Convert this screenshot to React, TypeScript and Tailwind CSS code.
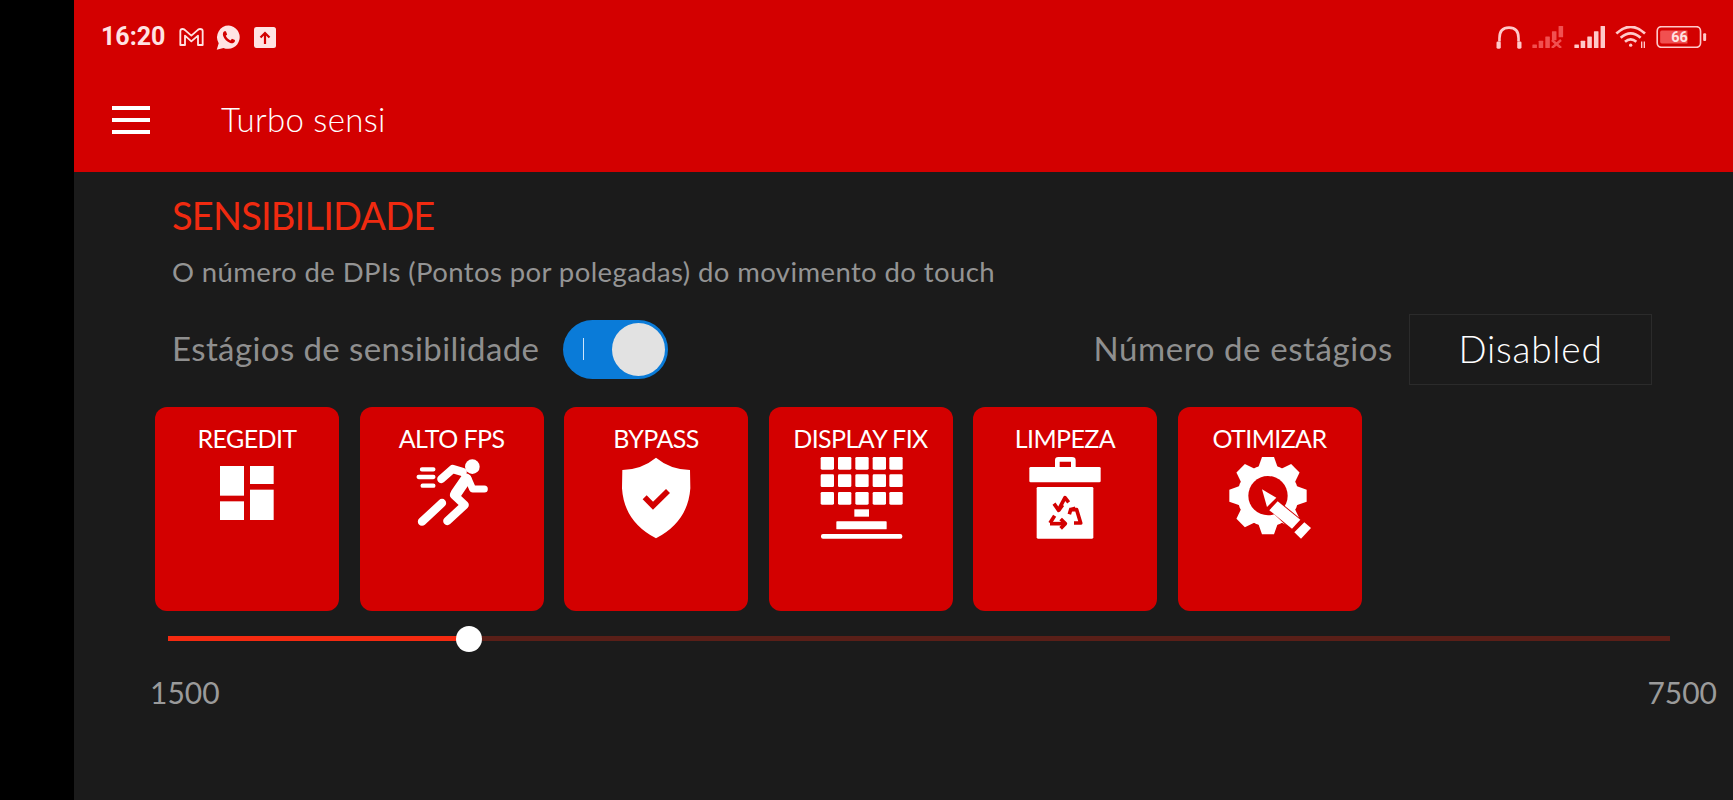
import React from "react";

const RED = "#d30000";
const W = "#ffffff";

function RegeditIcon() {
  return (
    <svg viewBox="142 165 300 270" className="w-[100px] h-[90px]" fill={W}>
      <rect x="211" y="195" width="72" height="89" />
      <rect x="301" y="195" width="71" height="54" />
      <rect x="211" y="301" width="72" height="56" />
      <rect x="301" y="266" width="71" height="91" />
    </svg>
  );
}

function RunIcon() {
  return (
    <svg viewBox="756 165 300 270" className="w-[100px] h-[90px]">
      <circle cx="967" cy="197" r="22" fill={W} />
      <g stroke={W} strokeLinecap="round" strokeLinejoin="round" fill="none">
        <path d="M816 205H850M806 228H850M818 254H850" strokeWidth="13" />
        <path d="M874 234L908 204L938 213" strokeWidth="25" />
        <path d="M948 234L918 278" strokeWidth="33" />
        <path d="M912 282L944 312L892 360" strokeWidth="25" />
        <path d="M954 232L968 264H1003" strokeWidth="21" />
        <path d="M816 362L876 306" strokeWidth="25" />
      </g>
    </svg>
  );
}

function ShieldIcon() {
  return (
    <svg viewBox="138 165 300 270" className="w-[100px] h-[90px]">
      <path d="M288 170Q330 205 390 207L391 262Q384 362 288 412Q192 362 186 262L187 207Q246 205 288 170Z" fill={W} />
      <path d="M254 289L279 314L324 270" fill="none" stroke={RED} strokeWidth="17" />
    </svg>
  );
}

function DisplayIcon() {
  const xs = [779, 831, 883, 935, 985];
  const ys = [168, 220, 273];
  return (
    <svg viewBox="750 165 300 270" className="w-[100px] h-[90px]" fill={W}>
      {ys.map((y) => xs.map((x) => <rect key={`${x}-${y}`} x={x} y={y} width="40" height="38" rx="4" />))}
      <rect x="880" y="325" width="44" height="22" />
      <rect x="826" y="361" width="151" height="24" rx="2" />
      <rect x="780" y="399" width="244" height="14" rx="6" />
    </svg>
  );
}

function TrashIcon() {
  return (
    <svg viewBox="165 165 300 270" className="w-[100px] h-[90px]">
      <path d="M285 200V178Q285 168 295 168H336Q347 168 347 178V200H333V182H299V200Z" fill={W} />
      <rect x="208" y="198" width="214" height="46" rx="4" fill={W} />
      <rect x="230" y="258" width="170" height="155" rx="4" fill={W} />
      <g fill="none" stroke={RED} strokeWidth="11" strokeLinejoin="round">
        <path d="M296 326L315 290L326 304" />
        <path d="M282 308L296 328L308 312" />
        <path d="M328 326H350L362 366H342" />
        <path d="M328 340L332 326L346 322" />
        <path d="M270 366L284 344" />
        <path d="M270 368H310" />
        <path d="M302 354L316 368L302 382" />
      </g>
    </svg>
  );
}

function GearIcon() {
  const angles = [0, 45, 90, 135, 180, 225, 270, 315];
  return (
    <svg viewBox="777 165 300 270" className="w-[100px] h-[90px]">
      <circle cx="921" cy="284" r="92" fill={W} />
      {angles.map((a) => (
        <path key={a} d="M903 168H939L952 205H890Z" fill={W} transform={`rotate(${a} 921 284)`} />
      ))}
      <circle cx="921" cy="284" r="59" fill={RED} />
      <path d="M925 326L950 297L1024 358L995 392Z" fill={RED} />
      <path d="M903 265L946 290L918 318Z" fill={W} />
      <path d="M950 301L1018 356L993 383L925 328Z" fill={W} />
      <path d="M1030 364L1050 381L1020 413L1000 394Z" fill={W} />
    </svg>
  );
}

function GmailMark() {
  return (
    <svg viewBox="327 83 73 54" className="w-[25px] h-[18px]" fill="none" stroke="#ffe3e3" strokeWidth="5.5" strokeLinejoin="round">
      <path d="M330 134V92Q330 86 337 86Q342 86 345 90L363 106L381 90Q384 86 389 86Q397 86 397 92V134H383V106L363 123L344 106V134Z" />
    </svg>
  );
}

function WhatsappMark() {
  return (
    <svg viewBox="0 0 24 24" className="ml-[12px] h-[25px] w-[25px]">
      <path d="M12.3 0.5A11.2 11.2 0 0 0 2.6 17.4L0.7 23.8L7.2 22A11.2 11.2 0 1 0 12.3 0.5Z" fill="#ffe3e3" />
      <path d="M8 6C6.8 6.7 6.2 8.4 6.9 10.5C8 13.5 10.5 16 13.6 17.2C15.7 17.9 17.4 17.2 18 16L18.2 14.5L15.3 13.1L13.9 14.8C11.9 13.9 10.3 12.3 9.4 10.3L10.7 9L9.5 6Z" fill={RED} />
    </svg>
  );
}

function UploadMark() {
  return (
    <svg viewBox="0 0 22 21" className="w-[22px] h-[21px]">
      <rect width="22" height="21" rx="2.5" fill="#ffe3e3" />
      <path d="M11 17V6M6.5 10.5L11 6L15.5 10.5" fill="none" stroke={RED} strokeWidth="2.2" />
    </svg>
  );
}

function Headphones() {
  return (
    <svg viewBox="78 45 78 70" className="w-[26px] h-[23px]" fill="none" stroke="#ffc9c9">
      <path d="M88 92V82Q88 50 117 50Q146 50 146 82V92" strokeWidth="8" />
      <rect x="79" y="92" width="13" height="22" rx="4" fill="#ffc9c9" strokeWidth="0" />
      <rect x="142" y="92" width="13" height="22" rx="4" fill="#ffc9c9" strokeWidth="0" />
    </svg>
  );
}

function Bars({ dim }: { dim?: boolean }) {
  const c = dim ? "#f15050" : "#ffc9c9";
  const bars = dim
    ? [
        [0, 103, 10],
        [18, 92, 21],
        [37, 80, 33],
        [56, 65, 26],
        [75, 50, 32],
      ]
    : [
        [0, 103, 10],
        [18, 92, 21],
        [37, 80, 33],
        [56, 65, 48],
        [75, 50, 63],
      ];
  return (
    <svg viewBox="0 50 88 63" className="w-[31.5px] h-[22px]">
      {bars.map(([x, y, h]) => (
        <rect key={x} x={x} y={y} width="13" height={h} rx="1.5" fill={c} />
      ))}
      {dim && <path d="M56 90L82 113M82 90L56 113" stroke={c} strokeWidth="7" />}
    </svg>
  );
}

function Wifi() {
  return (
    <svg viewBox="432 50 93 65" className="w-[31px] h-[22px]" fill="none" stroke="#ffc9c9" strokeWidth="8">
      <path d="M436 72Q479 32 522 72" />
      <path d="M449 85Q479 58 509 85" />
      <path d="M462 97Q479 82 496 97" />
      <circle cx="479" cy="107" r="5" fill="#ffc9c9" strokeWidth="0" />
      <path d="M512 96V120M520 96V120" strokeWidth="4" />
    </svg>
  );
}

function Battery() {
  return (
    <svg viewBox="560 48 152 67" className="w-[51px] h-[22px]">
      <rect x="562" y="50" width="132" height="63" rx="13" fill="none" stroke="#ffc9c9" strokeWidth="5" />
      <path d="M576 62H654V101H576Q571 101 571 96V67Q571 62 576 62Z" fill="#f15050" />
      <rect x="702" y="70" width="9" height="24" rx="3" fill="#ffc9c9" />
      <text x="630" y="98" textAnchor="middle" fontSize="44" fontWeight="700" fill="#ffe3e3" fontFamily="Roboto, sans-serif">66</text>
    </svg>
  );
}

const cards = [
  { t: "REGEDIT", I: RegeditIcon },
  { t: "ALTO FPS", I: RunIcon },
  { t: "BYPASS", I: ShieldIcon },
  { t: "DISPLAY FIX", I: DisplayIcon },
  { t: "LIMPEZA", I: TrashIcon },
  { t: "OTIMIZAR", I: GearIcon },
];

export default function App() {
  return (
    <div className="flex h-[800px] w-[1733px] overflow-hidden bg-black font-['Lato',sans-serif]">
      <div className="w-[74px] shrink-0" />
      <div className="flex flex-1 flex-col bg-[#1b1b1b]">
        <header className="h-[172px] bg-[#d30000] text-white">
          <div className="flex h-[74px] items-center justify-between pl-[27px] pr-[26px]">
            <div className="flex items-center text-[#ffe3e3]">
              <span className="w-[78px] font-['Roboto',sans-serif] text-[25px] font-bold">16:20</span>
              <GmailMark />
              <WhatsappMark />
              <span className="ml-[13px]"><UploadMark /></span>
            </div>
            <div className="flex items-center gap-[10px]">
              <Headphones />
              <Bars dim />
              <Bars />
              <Wifi />
              <Battery />
            </div>
          </div>
          <div className="flex h-[94px] items-center pb-[2px] pl-[38px]">
            <div className="flex w-[38px] flex-col gap-[8px]">
              <div className="h-[4px] bg-white" />
              <div className="h-[4px] bg-white" />
              <div className="h-[4px] bg-white" />
            </div>
            <span className="ml-[71px] text-[33px] font-light tracking-[0.3px]">Turbo sensi</span>
          </div>
        </header>

        <main className="flex flex-1 flex-col">
          <div className="pl-[98px] pt-[19px]">
            <h1 className="text-[38px] font-normal leading-[48px] tracking-[-0.8px] text-[#f02a10]">SENSIBILIDADE</h1>
            <p className="mt-[16px] text-[27.5px] leading-[34px] tracking-[0.4px] text-[#949494]">O número de DPIs (Pontos por polegadas) do movimento do touch</p>
          </div>

          <div className="mt-[24.5px] flex items-center pl-[98px] pr-[81px]">
            <span className="w-[391px] text-[33px] tracking-[0.4px] text-[#8f8f8f]">Estágios de sensibilidade</span>
            <div className="flex h-[59px] w-[105px] items-center justify-between rounded-full bg-[#0a7bd8] pl-[20px] pr-[3px]">
              <div className="h-[22px] w-[1px] bg-[#cfe6fb]" />
              <div className="h-[53px] w-[53px] rounded-full bg-[#e2e2e2]" />
            </div>
            <span className="ml-auto text-[33px] tracking-[0.6px] text-[#8f8f8f]">Número de estágios</span>
            <div className="ml-[16px] flex h-[71px] w-[243px] items-center justify-center border border-[#2b2b2b] text-[37px] font-light tracking-[0.8px] text-white">Disabled</div>
          </div>

          <div className="ml-[81px] mt-[22px] flex gap-[20.5px]">
            {cards.map(({ t, I }) => (
              <div key={t} className="flex h-[204px] w-[184px] flex-col items-center rounded-[12px] bg-[#d30000] text-white">
                <div className="mt-[16px] h-[33px] text-[25px] leading-[31px] tracking-[-0.6px]">{t}</div>
                <I />
              </div>
            ))}
          </div>

          <div className="relative ml-[94px] mt-[25.5px] h-[5px] w-[1502px] bg-[#5a1f18]">
            <div className="h-full w-[20%] bg-[#f52a10]" />
            <div className="absolute left-[288px] top-[-10.5px] h-[26px] w-[26px] rounded-full bg-white" />
          </div>

          <div className="ml-[76px] mr-[16px] mt-[32.5px] flex justify-between text-[30px] leading-[36px] text-[#9a9a9a]">
            <span>1500</span>
            <span>7500</span>
          </div>
        </main>
      </div>
    </div>
  );
}
